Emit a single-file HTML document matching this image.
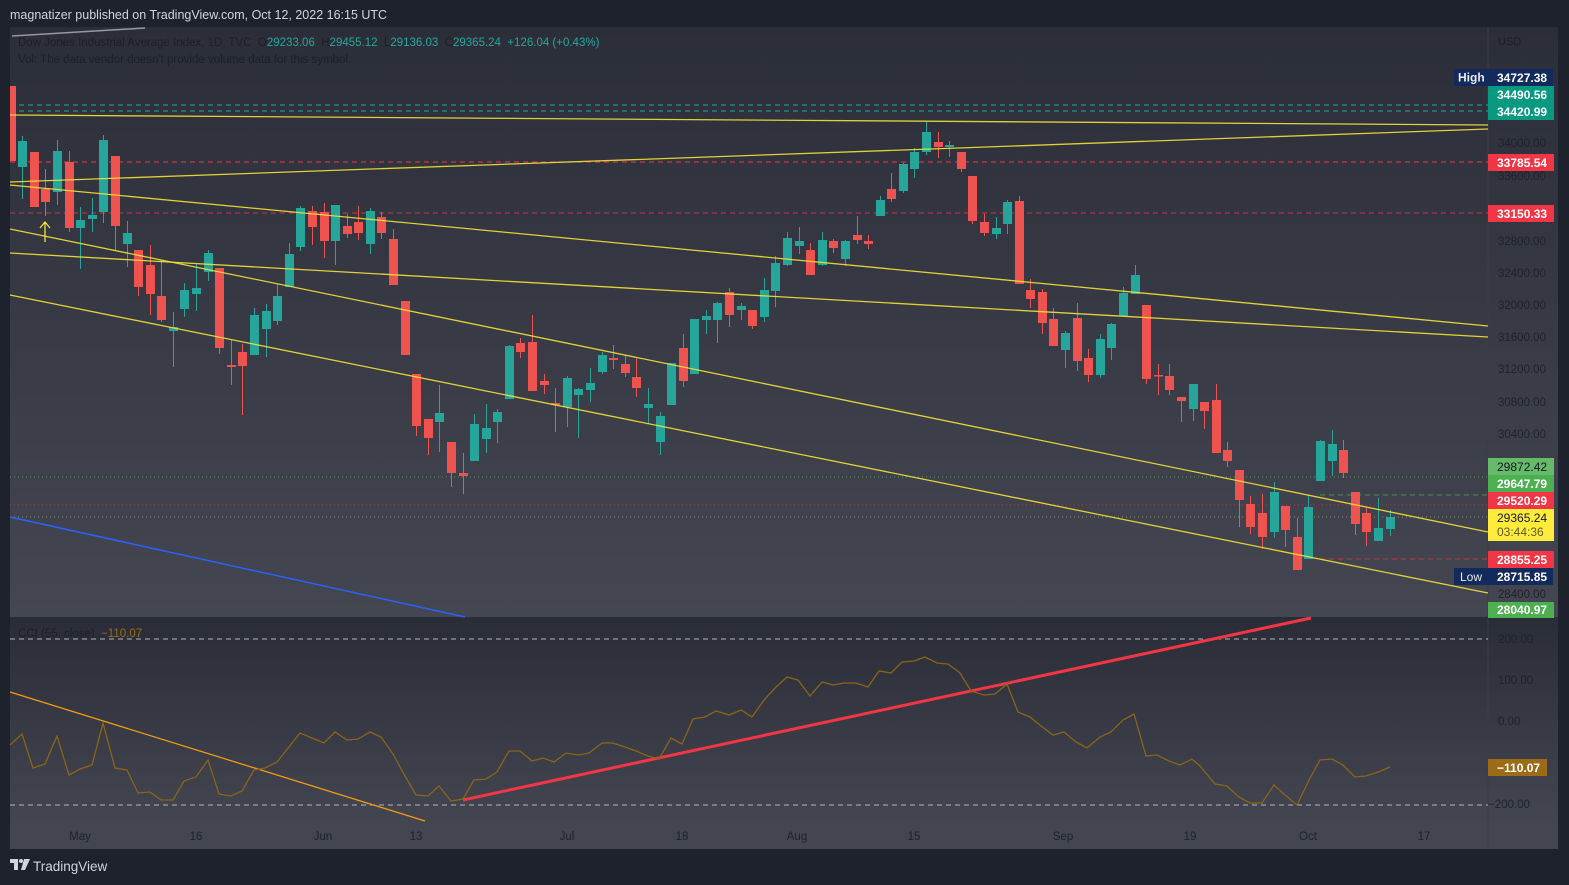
<!DOCTYPE html>
<html><head><meta charset="utf-8"><style>
html,body{margin:0;padding:0;background:#1e222d;width:1569px;height:885px;overflow:hidden}
svg{display:block}
text{font-family:"Liberation Sans",sans-serif;white-space:pre}
</style></head><body>
<svg width="1569" height="885" viewBox="0 0 1569 885" xmlns="http://www.w3.org/2000/svg">
<defs>
<linearGradient id="gp" x1="0" y1="0" x2="0" y2="1"><stop offset="0" stop-color="#2b2e39"/><stop offset="1" stop-color="#444651"/></linearGradient>
<linearGradient id="gc" x1="0" y1="0" x2="0" y2="1"><stop offset="0" stop-color="#2a2d38"/><stop offset="1" stop-color="#434550"/></linearGradient>
</defs>
<rect width="1569" height="885" fill="#1e222d"/>
<text x="10" y="19" font-size="12.5" fill="#d1d4dc">magnatizer published on TradingView.com, Oct 12, 2022 16:15 UTC</text>
<rect x="10" y="27" width="1548" height="591" fill="url(#gp)"/>
<rect x="10" y="618" width="1548" height="204" fill="url(#gc)"/>
<rect x="10" y="822" width="1548" height="27" fill="#434651"/>
<line x1="1488" y1="27" x2="1488" y2="849" stroke="#3a3d48" stroke-width="1"/>
<line x1="10" y1="617.5" x2="1558" y2="617.5" stroke="#2a2e39"/>
<line x1="12" y1="36" x2="145" y2="28" stroke="#9598a1" stroke-width="1.5"/>
<text x="18" y="46" font-size="11.5" fill="#1c1f28">Dow Jones Industrial Average Index, 1D, TVC  O<tspan fill="#26a69a">29233.06</tspan>  H<tspan fill="#26a69a">29455.12</tspan>  L<tspan fill="#26a69a">29136.03</tspan>  C<tspan fill="#26a69a">29365.24  +126.04 (+0.43%)</tspan></text>
<text x="18" y="63" font-size="11.5" fill="#1c1f28">Vol: The data vendor doesn't provide volume data for this symbol.</text>
<text x="1498" y="45" font-size="11" fill="#1c1f28">USD</text>

<g fill="none" stroke-width="1">
<line x1="10" y1="105" x2="1488" y2="105" stroke="#26a69a" stroke-dasharray="5,4"/>
<line x1="10" y1="111" x2="1488" y2="111" stroke="#26a69a" stroke-dasharray="5,4"/>
<line x1="10" y1="162" x2="1488" y2="162" stroke="#f23645" stroke-dasharray="5,4"/>
<line x1="10" y1="213" x2="1488" y2="213" stroke="#f23645" stroke-dasharray="5,4" stroke-opacity=".8"/>
<line x1="10" y1="477" x2="1488" y2="477" stroke="#5b8f5e" stroke-dasharray="1,3"/>
<line x1="1320" y1="495" x2="1488" y2="495" stroke="#4caf50" stroke-dasharray="5,4" stroke-opacity=".7"/>
<line x1="10" y1="505" x2="1488" y2="505" stroke="#a04048" stroke-dasharray="1,3"/>
<line x1="10" y1="517" x2="1488" y2="517" stroke="#8a8a5a" stroke-dasharray="1,3"/>
<line x1="1320" y1="559" x2="1488" y2="559" stroke="#f23645" stroke-dasharray="5,4" stroke-opacity=".7"/>
</g>

<g stroke="#26a69a" stroke-width="1" fill="none">
<path d="M22.5 136V199M57.5 140V205M80.5 207V269M92.5 198V232M103.5 135V223M127.5 221V267M173.5 312V367M184.5 283V317M196.5 264V311M208.5 250V281M254.5 308V355M266.5 304V357M277.5 284V325M289.5 243V287M300.5 206V251M335.5 205V265M370.5 208V254M439.5 385V452M474.5 414V461M486.5 404V453M497.5 409V443M509.5 345V399M567.5 376V427M578.5 388V438M590.5 368V402M602.5 352V374M648.5 388V424M660.5 412V455M671.5 363V405M694.5 319V374M706.5 310V334M717.5 302V343M741.5 303V320M764.5 278V322M775.5 256V307M787.5 232V266M799.5 227V254M822.5 232V266M845.5 240V266M880.5 196V216M903.5 163V193M914.5 148V178M926.5 122V155M949.5 141V157M996.5 217V239M1007.5 200V234M1065.5 331V368M1100.5 334V378M1111.5 323V360M1123.5 287V316M1135.5 265V294M1193.5 384V421M1274.5 482V538M1308.5 495V559M1320.5 440V481M1332.5 430V476M1378.5 498V541M1390.5 510V536"/>
</g>
<g stroke="#ef5350" stroke-width="1" fill="none">
<path d="M45.5 169V216M69.5 151V232M115.5 156V251M138.5 250V296M150.5 245V315M161.5 260V322M219.5 268V354M231.5 340V385M242.5 344V415M312.5 206V245M324.5 203V258M347.5 214V238M358.5 206V240M381.5 212V239M393.5 229V285M416.5 374V436M428.5 419V455M451.5 442V487M463.5 453V494M520.5 338V358M532.5 315V391M544.5 374V394M555.5 388V432M613.5 345V369M625.5 355V377M636.5 358V397M683.5 334V387M729.5 288V327M752.5 310V329M810.5 243V275M833.5 239V253M857.5 216V244M868.5 235V249M891.5 173V202M938.5 132V158M961.5 152V172M972.5 176V224M984.5 214V236M1019.5 196V284M1030.5 279V308M1042.5 289V334M1053.5 308V346M1077.5 303V371M1088.5 349V382M1146.5 305V384M1158.5 364V395M1169.5 364V395M1181.5 397V422M1204.5 402V429M1216.5 384V453M1227.5 442V467M1239.5 470V527M1250.5 496V534M1262.5 494V549M1285.5 506V547M1297.5 518V570M1343.5 440V478M1355.5 492V535M1366.5 508V546"/>
</g>
<g fill="#26a69a">
<rect x="18" y="141" width="9" height="26"/><rect x="53" y="151" width="9" height="41"/><rect x="76" y="220" width="9" height="8"/><rect x="88" y="215" width="9" height="4"/><rect x="99" y="140" width="9" height="72"/><rect x="123" y="233" width="9" height="11"/><rect x="169" y="327" width="9" height="4"/><rect x="180" y="290" width="9" height="19"/><rect x="192" y="288" width="9" height="6"/><rect x="204" y="253" width="9" height="19"/><rect x="250" y="315" width="9" height="40"/><rect x="262" y="311" width="9" height="18"/><rect x="273" y="296" width="9" height="25"/><rect x="285" y="254" width="9" height="33"/><rect x="296" y="208" width="9" height="39"/><rect x="331" y="205" width="9" height="36"/><rect x="366" y="211" width="9" height="33"/><rect x="435" y="413" width="9" height="9"/><rect x="470" y="424" width="9" height="37"/><rect x="482" y="428" width="9" height="11"/><rect x="493" y="412" width="9" height="10"/><rect x="505" y="346" width="9" height="53"/><rect x="563" y="378" width="9" height="29"/><rect x="574" y="389" width="9" height="6"/><rect x="586" y="383" width="9" height="7"/><rect x="598" y="355" width="9" height="17"/><rect x="644" y="404" width="9" height="4"/><rect x="656" y="416" width="9" height="26"/><rect x="667" y="363" width="9" height="42"/><rect x="690" y="319" width="9" height="55"/><rect x="702" y="316" width="9" height="4"/><rect x="713" y="303" width="9" height="17"/><rect x="737" y="306" width="9" height="4"/><rect x="760" y="290" width="9" height="27"/><rect x="771" y="263" width="9" height="28"/><rect x="783" y="238" width="9" height="27"/><rect x="795" y="241" width="9" height="5"/><rect x="818" y="240" width="9" height="25"/><rect x="841" y="241" width="9" height="18"/><rect x="876" y="200" width="9" height="16"/><rect x="899" y="164" width="9" height="27"/><rect x="910" y="152" width="9" height="17"/><rect x="922" y="132" width="9" height="20"/><rect x="945" y="145" width="9" height="2"/><rect x="992" y="228" width="9" height="6"/><rect x="1003" y="202" width="9" height="22"/><rect x="1061" y="333" width="9" height="17"/><rect x="1096" y="339" width="9" height="36"/><rect x="1107" y="324" width="9" height="24"/><rect x="1119" y="293" width="9" height="23"/><rect x="1131" y="275" width="9" height="19"/><rect x="1189" y="384" width="9" height="25"/><rect x="1270" y="492" width="9" height="40"/><rect x="1304" y="507" width="9" height="52"/><rect x="1316" y="441" width="9" height="40"/><rect x="1328" y="444" width="9" height="17"/><rect x="1374" y="528" width="9" height="13"/><rect x="1386" y="517" width="9" height="12"/>
</g>
<g fill="#ef5350">
<rect x="10" y="86" width="6" height="75"/><rect x="30" y="152" width="9" height="55"/><rect x="41" y="189" width="9" height="13"/><rect x="65" y="162" width="9" height="66"/><rect x="111" y="156" width="9" height="70"/><rect x="134" y="250" width="9" height="37"/><rect x="146" y="265" width="9" height="29"/><rect x="157" y="296" width="9" height="24"/><rect x="215" y="268" width="9" height="80"/><rect x="227" y="365" width="9" height="2"/><rect x="238" y="352" width="9" height="14"/><rect x="308" y="211" width="9" height="16"/><rect x="320" y="212" width="9" height="29"/><rect x="343" y="226" width="9" height="8"/><rect x="354" y="222" width="9" height="11"/><rect x="377" y="217" width="9" height="16"/><rect x="389" y="239" width="9" height="46"/><rect x="401" y="301" width="9" height="54"/><rect x="412" y="374" width="9" height="52"/><rect x="424" y="419" width="9" height="19"/><rect x="447" y="442" width="9" height="31"/><rect x="459" y="473" width="9" height="3"/><rect x="516" y="343" width="9" height="9"/><rect x="528" y="342" width="9" height="49"/><rect x="540" y="381" width="9" height="4"/><rect x="551" y="403" width="9" height="2"/><rect x="609" y="358" width="9" height="2"/><rect x="621" y="364" width="9" height="9"/><rect x="632" y="377" width="9" height="11"/><rect x="679" y="348" width="9" height="33"/><rect x="725" y="292" width="9" height="23"/><rect x="748" y="310" width="9" height="16"/><rect x="806" y="250" width="9" height="25"/><rect x="829" y="241" width="9" height="7"/><rect x="853" y="235" width="9" height="5"/><rect x="864" y="241" width="9" height="3"/><rect x="887" y="189" width="9" height="10"/><rect x="934" y="142" width="9" height="5"/><rect x="957" y="152" width="9" height="17"/><rect x="968" y="176" width="9" height="45"/><rect x="980" y="222" width="9" height="11"/><rect x="1015" y="201" width="9" height="83"/><rect x="1026" y="290" width="9" height="9"/><rect x="1038" y="292" width="9" height="31"/><rect x="1049" y="319" width="9" height="27"/><rect x="1073" y="318" width="9" height="43"/><rect x="1084" y="358" width="9" height="17"/><rect x="1142" y="305" width="9" height="74"/><rect x="1154" y="375" width="9" height="1.5"/><rect x="1165" y="376" width="9" height="14"/><rect x="1177" y="397" width="9" height="4"/><rect x="1200" y="402" width="9" height="9"/><rect x="1212" y="400" width="9" height="53"/><rect x="1223" y="450" width="9" height="11"/><rect x="1235" y="470" width="9" height="30"/><rect x="1246" y="504" width="9" height="23"/><rect x="1258" y="513" width="9" height="24"/><rect x="1281" y="506" width="9" height="24"/><rect x="1293" y="537" width="9" height="33"/><rect x="1339" y="450" width="9" height="23"/><rect x="1351" y="492" width="9" height="32"/><rect x="1362" y="513" width="9" height="19"/>
</g>

<g stroke="#f3e23a" stroke-width="1.3" fill="none" stroke-opacity=".9">
<line x1="10" y1="115" x2="1488" y2="125"/>
<line x1="10" y1="182" x2="1488" y2="129"/>
<line x1="10" y1="185" x2="1488" y2="326"/>
<line x1="10" y1="253" x2="1488" y2="337"/>
<line x1="10" y1="229" x2="1488" y2="532"/>
<line x1="10" y1="295" x2="1488" y2="593"/>
</g>
<line x1="10" y1="517" x2="465" y2="617" stroke="#2962ff" stroke-width="1.5"/>
<path d="M45 242V222M40 228L45 222L50 228" stroke="#f3e23a" stroke-width="1.3" fill="none"/>

<g font-size="11.5" fill="#1e222b">
<text x="1498" y="147">34000.00</text><text x="1498" y="180">33600.00</text>
<text x="1498" y="245">32800.00</text><text x="1498" y="277">32400.00</text><text x="1498" y="309">32000.00</text>
<text x="1498" y="341">31600.00</text><text x="1498" y="373">31200.00</text><text x="1498" y="406">30800.00</text>
<text x="1498" y="438">30400.00</text><text x="1498" y="598">28400.00</text>
<text x="1498" y="643">200.00</text><text x="1498" y="684">100.00</text><text x="1498" y="725">0.00</text><text x="1488" y="808">−200.00</text>
</g>
<g font-size="12" font-weight="bold">
<rect x="1454" y="69" width="99" height="17" fill="#132a5c"/><text x="1458" y="81.5" fill="#e8eaf0">High</text><text x="1497" y="82" fill="#fff">34727.38</text>
<rect x="1488" y="86" width="66" height="34" fill="#089981"/><text x="1497" y="99" fill="#fff">34490.56</text><text x="1497" y="116" fill="#fff">34420.99</text>
<rect x="1488" y="154" width="66" height="17" fill="#f23645"/><text x="1497" y="167" fill="#fff">33785.54</text>
<rect x="1488" y="205" width="66" height="17" fill="#f23645"/><text x="1497" y="218" fill="#fff">33150.33</text>
<rect x="1488" y="458" width="66" height="17" fill="#66bb6a"/><text x="1497" y="471" fill="#131722" font-weight="normal">29872.42</text>
<rect x="1488" y="475" width="66" height="17" fill="#4caf50"/><text x="1497" y="488" fill="#fff">29647.79</text>
<rect x="1488" y="492" width="66" height="17" fill="#f23645"/><text x="1497" y="505" fill="#fff">29520.29</text>
<rect x="1488" y="509" width="66" height="32" fill="#ffeb3b"/><text x="1497" y="522" fill="#131722" font-weight="normal">29365.24</text><text x="1497" y="536" fill="#5d5a2a" font-weight="normal">03:44:36</text>
<rect x="1488" y="551" width="66" height="17" fill="#f23645"/><text x="1497" y="564" fill="#fff">28855.25</text>
<rect x="1454" y="568" width="99" height="17" fill="#132a5c"/><text x="1460" y="581" fill="#e8eaf0" font-weight="normal">Low</text><text x="1497" y="581" fill="#fff">28715.85</text>
<rect x="1488" y="602" width="66" height="16" fill="#4caf50"/><text x="1497" y="614" fill="#fff">28040.97</text>
<rect x="1488" y="759" width="59" height="17" fill="#9c6b17"/><text x="1497" y="772" fill="#fff">−110.07</text>
</g>

<text x="18" y="637" font-size="11.5" fill="#1c1f28">CCI (55, close)  <tspan fill="#9c6b17">−110.07</tspan></text>
<line x1="10" y1="639" x2="1488" y2="639" stroke="#b2b5be" stroke-dasharray="5,4"/>
<line x1="10" y1="805" x2="1488" y2="805" stroke="#b2b5be" stroke-dasharray="5,4"/>
<line x1="10" y1="692" x2="425" y2="821" stroke="#f39a12" stroke-width="1.3"/>
<line x1="463" y1="800" x2="1311" y2="618" stroke="#f23645" stroke-width="3"/>
<polyline fill="none" stroke="#8a6418" stroke-width="1.3" points="10,745 22,734 33,768 45,764 57,736 69,775 80,769 92,765 103,723 115,768 127,770 138,793 150,792 161,800 173,800 184,781 196,777 208,760 219,794 231,796 242,791 254,770 265,768 277,762 289,747 300,733 312,738 324,743 335,732 347,740 358,739 370,732 381,737 393,754 405,776 416,795 428,796 439,786 451,801 463,799 474,780 486,779 497,772 509,751 520,751 532,761 543,758 554,762 566,753 578,755 589,753 602,743 613,743 625,747 636,751 648,756 659,759 671,738 682,744 693,719 705,717 716,711 729,715 741,710 752,717 764,700 775,688 787,677 798,680 810,696 822,682 833,685 844,683 856,683 868,687 879,671 891,673 902,662 914,661 925,657 937,663 948,664 960,673 971,691 984,695 995,694 1007,684 1018,712 1030,717 1041,726 1053,735 1064,732 1076,742 1087,748 1100,737 1111,732 1123,720 1134,714 1146,756 1157,755 1169,761 1180,765 1192,759 1200,766 1215,784 1227,786 1239,797 1250,803 1262,803 1274,785 1285,795 1297,805 1309,780 1320,760 1332,759 1343,765 1355,777 1366,776 1378,772 1390,767"/>

<g font-size="11.5" fill="#1e222b" text-anchor="middle">
<text x="80" y="840">May</text><text x="196" y="840">16</text><text x="323" y="840">Jun</text><text x="416" y="840">13</text>
<text x="567" y="840">Jul</text><text x="682" y="840">18</text><text x="797" y="840">Aug</text><text x="914" y="840">15</text>
<text x="1063" y="840">Sep</text><text x="1190" y="840">19</text><text x="1308" y="840">Oct</text><text x="1424" y="840">17</text>
</g>

<g fill="#d1d4dc">
<path d="M10 859h8v11h-4v-7h-4z"/><circle cx="21" cy="861" r="2"/><path d="M24 859h6l-5 11h-4z"/>
</g>
<text x="33" y="871" font-size="13.5" fill="#d1d4dc">TradingView</text>
</svg>
</body></html>
